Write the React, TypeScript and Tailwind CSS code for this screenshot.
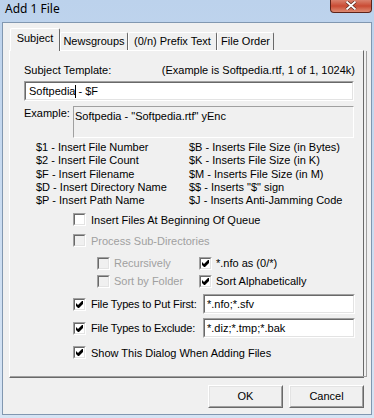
import React from 'react';

const sans = { fontFamily: '"Liberation Sans", Arial, sans-serif' };

function Check({ checked = false, disabled = false }: { checked?: boolean; disabled?: boolean }) {
  return (
    <div className="flex h-[13px] w-[13px] shrink-0 border border-t-[#a0a0a0] border-l-[#a0a0a0] border-b-white border-r-white">
      <div
        className={`relative flex-1 border border-t-[#696969] border-l-[#696969] border-b-[#e3e3e3] border-r-[#e3e3e3] ${
          disabled ? 'bg-[#f0f0f0]' : 'bg-white'
        }`}
      >
        {checked && (
          <svg className="absolute left-[1px] top-[1px]" width="7" height="7" viewBox="0 0 7 7">
            <polygon points="0,2 2,4 6,0 7,0 7,3 3,7 2,7 0,5" fill={disabled ? '#a0a0a0' : '#000'} />
          </svg>
        )}
      </div>
    </div>
  );
}

function Sunken({ className = '', children }: { className?: string; children?: React.ReactNode }) {
  return (
    <div className={`flex border border-t-[#a0a0a0] border-l-[#a0a0a0] border-b-white border-r-white ${className}`}>
      <div className="flex flex-1 items-center border border-t-[#696969] border-l-[#696969] border-b-[#e3e3e3] border-r-[#e3e3e3] bg-white pl-[1px]">
        {children}
      </div>
    </div>
  );
}

function Tab({ label, width, active = false }: { label: string; width: string; active?: boolean }) {
  return (
    <div
      className={`flex shrink-0 justify-center rounded-t-[2px] border-l border-t border-l-white border-t-white border-r border-r-[#696969] bg-[#f0f0f0] ${width} ${
        active ? 'relative z-10 -mb-px h-[23px] pt-[3px]' : 'h-[18px] pt-[2px]'
      }`}
    >
      <span className="whitespace-nowrap leading-[13px]">{label}</span>
    </div>
  );
}

function Button({ label }: { label: string }) {
  return (
    <div className="flex h-[23px] w-[75px] border border-t-white border-l-white border-b-[#696969] border-r-[#696969]">
      <div className="flex flex-1 items-center justify-center border border-t-[#e3e3e3] border-l-[#e3e3e3] border-b-[#a0a0a0] border-r-[#a0a0a0] bg-[#f0f0f0]">
        {label}
      </div>
    </div>
  );
}

const vars = [
  ['$1 - Insert File Number', '$B - Inserts File Size (in Bytes)'],
  ['$2 - Insert File Count', '$K - Inserts File Size (in K)'],
  ['$F - Insert Filename', '$M - Inserts File Size (in M)'],
  ['$D - Insert Directory Name', '$$ - Inserts "$" sign'],
  ['$P - Insert Path Name', '$J - Inserts Anti-Jamming Code'],
];

export default function App() {
  return (
    <div className="flex h-[418px] w-[374px] flex-col bg-gradient-to-b from-[#bcd2ec] via-[#cadcf1] to-[#d6e4f4] px-[2px] pb-[3px]">
      {/* title bar */}
      <div className="flex h-[22px] items-start">
        <span
          className="ml-[3px] mt-[2px] text-[12px] leading-[14px] text-black"
          style={{ fontFamily: '"Noto Sans", "Open Sans", sans-serif' }}
        >
          Add 1 File
        </span>
        <div className="ml-auto flex h-[13px] w-[42px] items-center justify-center rounded-b-[4px] border border-t-0 border-[#5d2319] bg-gradient-to-b from-[#d9816d] via-[#c94a33] to-[#dd8a72]">
          <svg width="12" height="9" viewBox="0 0 12 9" className="-mt-[1px]">
            <path d="M1.5 0.5 L10.5 8.5 M10.5 0.5 L1.5 8.5" stroke="#5a2a20" strokeWidth="3.2" />
            <path d="M1.5 0.5 L10.5 8.5 M10.5 0.5 L1.5 8.5" stroke="#ffffff" strokeWidth="1.8" />
          </svg>
        </div>
      </div>

      {/* client */}
      <div className="flex flex-1 flex-col border border-[#8197b0] bg-[#f0f0f0] pt-[5px] text-[11px] text-black" style={sans}>
        <div className="relative z-10 ml-[7px] flex h-[22px] items-end">
          <Tab label="Subject" width="w-[50px]" active />
          <Tab label="Newsgroups" width="w-[68px]" />
          <Tab label="(0/n) Prefix Text" width="w-[89px]" />
          <Tab label="File Order" width="w-[57px]" />
        </div>

        <div className="ml-[6px] flex h-[328px] w-[355px] border-l border-t border-l-white border-t-white border-r border-b border-r-[#696969] border-b-[#696969]">
          <div className="flex flex-1 flex-col border-r border-b border-r-[#a0a0a0] border-b-[#a0a0a0] pl-[14px] pr-[11px] pt-[12px]">
            <div className="flex h-[14px] items-center justify-between leading-[14px]">
              <span>Subject Template:</span>
              <span>(Example is Softpedia.rtf, 1 of 1, 1024k)</span>
            </div>

            <Sunken className="mr-[1px] mt-[4px] h-[20px]">
              <span className="pl-[2px] leading-[14px]">Softpedia</span>
              <span className="mr-[2px] h-[13px] w-px bg-black" />
              <span className="leading-[14px]">- $F</span>
            </Sunken>

            <div className="mt-[5px] flex">
              <span className="w-[49px] shrink-0 leading-[14px]">Example:</span>
              <div className="mr-[1px] h-[32px] flex-1 border border-t-[#a0a0a0] border-l-[#a0a0a0] border-b-white border-r-white pl-[1px] pt-[2px] leading-[14px]">
                Softpedia - "Softpedia.rtf" yEnc
              </div>
            </div>

            <div className="mt-[3px] grid grid-cols-[153px_1fr] pl-[12px] leading-[13.25px]">
              {vars.map(([a, b]) => (
                <React.Fragment key={a}>
                  <span>{a}</span>
                  <span>{b}</span>
                </React.Fragment>
              ))}
            </div>

            <div className="ml-[49px] mt-[6px] flex h-[13px] items-center gap-[5px]">
              <Check />
              <span>Insert Files At Beginning Of Queue</span>
            </div>

            <div className="ml-[49px] mt-[8px] flex h-[13px] items-center gap-[5px] text-[#a0a0a0]">
              <Check disabled />
              <span>Process Sub-Directories</span>
            </div>

            <div className="ml-[73px] mt-[8px] grid h-[13px] grid-cols-[102px_1fr] items-center">
              <div className="flex items-center gap-[4px] text-[#a0a0a0]">
                <Check disabled />
                <span>Recursively</span>
              </div>
              <div className="flex items-center gap-[4px]">
                <Check checked />
                <span>*.nfo as (0/*)</span>
              </div>
            </div>

            <div className="ml-[73px] mt-[5px] grid h-[13px] grid-cols-[102px_1fr] items-center">
              <div className="flex items-center gap-[4px] text-[#a0a0a0]">
                <Check disabled />
                <span>Sort by Folder</span>
              </div>
              <div className="flex items-center gap-[4px]">
                <Check checked />
                <span>Sort Alphabetically</span>
              </div>
            </div>

            <div className="ml-[49px] mt-[8px] flex h-[20px] items-center gap-[5px]">
              <Check checked />
              <span className="w-[107px] shrink-0 whitespace-nowrap tracking-[-0.15px]">File Types to Put First:</span>
              <Sunken className="h-[20px] w-[152px]">
                <span className="pl-[1px]">*.nfo;*.sfv</span>
              </Sunken>
            </div>

            <div className="ml-[49px] mt-[4px] flex h-[20px] items-center gap-[5px]">
              <Check checked />
              <span className="w-[107px] shrink-0 whitespace-nowrap tracking-[-0.15px]">File Types to Exclude:</span>
              <Sunken className="h-[20px] w-[152px]">
                <span className="pl-[1px]">*.diz;*.tmp;*.bak</span>
              </Sunken>
            </div>

            <div className="ml-[49px] mt-[8px] flex h-[13px] items-center gap-[5px]">
              <Check checked />
              <span>Show This Dialog When Adding Files</span>
            </div>
          </div>
        </div>

        <div className="mt-[7px] flex justify-end gap-[6px] pr-[7px]">
          <Button label="OK" />
          <Button label="Cancel" />
        </div>
      </div>
    </div>
  );
}
